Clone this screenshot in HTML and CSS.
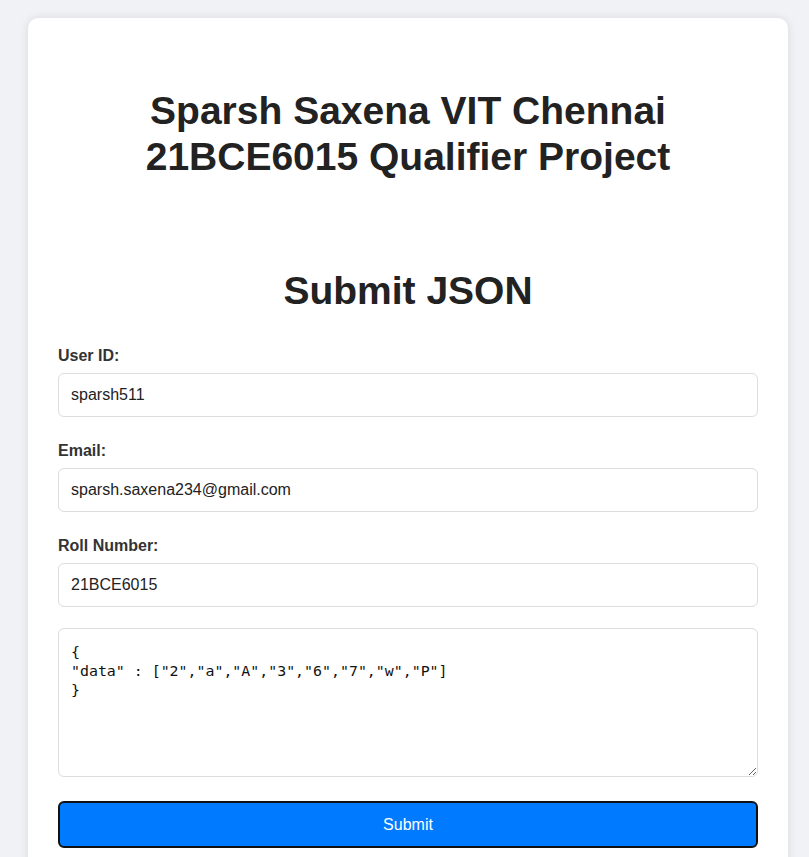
FILE: index.html
```html
<!DOCTYPE html>
<html lang="en">
<head>
<meta charset="utf-8">
<title>Submit JSON</title>
<link rel="stylesheet" href="styles.css">
</head>
<body>
<div class="card">
  <h1 class="title">Sparsh Saxena VIT Chennai 21BCE6015 Qualifier Project</h1>
  <h2 class="subtitle">Submit JSON</h2>
  <form class="form">
    <div class="group">
      <label class="label" for="uid">User ID:</label>
      <input class="field" id="uid" type="text" value="sparsh511">
    </div>
    <div class="group">
      <label class="label" for="email">Email:</label>
      <input class="field" id="email" type="text" value="sparsh.saxena234@gmail.com">
    </div>
    <div class="group">
      <label class="label" for="roll">Roll Number:</label>
      <input class="field" id="roll" type="text" value="21BCE6015">
    </div>
    <textarea class="json">{
"data" : ["2","a","A","3","6","7","w","P"]
}</textarea>
    <button class="submit" type="button">Submit</button>
  </form>
</div>
</body>
</html>
```
FILE: styles.css
```css
html, body {
  margin: 0;
  padding: 0;
}
body {
  background: #f0f2f5;
  font-family: "Liberation Sans", Arial, sans-serif;
  color: #222;
  padding: 18px 0 0 28px;
}
.card {
  box-sizing: border-box;
  width: 760px;
  background: #fff;
  border-radius: 10px;
  box-shadow: 0 0 10px rgba(0, 0, 0, 0.1);
  padding: 30px 30px 40px;
}
.title {
  margin: 40px 0 88px;
  font-size: 39px;
  line-height: 46px;
  font-weight: bold;
  text-align: center;
  color: #222;
  padding: 0 50px;
}
.subtitle {
  margin: 0 0 33px;
  font-size: 39px;
  line-height: 46px;
  font-weight: bold;
  text-align: center;
  color: #222;
}
.form {
  display: flex;
  flex-direction: column;
}
.group {
  display: flex;
  flex-direction: column;
  margin-bottom: 25px;
}
.group:nth-child(3) {
  margin-bottom: 21px;
}
.label {
  font-size: 16px;
  line-height: 18px;
  font-weight: bold;
  color: #333;
  margin-bottom: 8px;
}
.field {
  box-sizing: border-box;
  height: 44px;
  padding: 0 12px;
  border: 1px solid #ddd;
  border-radius: 6px;
  font-family: "Liberation Sans", Arial, sans-serif;
  font-size: 16px;
  color: #222;
  background: #fff;
  outline: none;
}
.json {
  box-sizing: border-box;
  height: 149px;
  padding: 14px 12px 12px;
  border: 1px solid #ddd;
  border-radius: 6px;
  font-family: "DejaVu Sans Mono", monospace;
  font-size: 14.9px;
  line-height: 19px;
  color: #111;
  resize: vertical;
  outline: none;
  margin-bottom: 24px;
}
.submit {
  box-sizing: border-box;
  height: 47px;
  background: #007bff;
  color: #fff;
  border: 2px solid #111;
  border-radius: 6px;
  font-family: "Liberation Sans", Arial, sans-serif;
  font-size: 16px;
  cursor: pointer;
}
```
